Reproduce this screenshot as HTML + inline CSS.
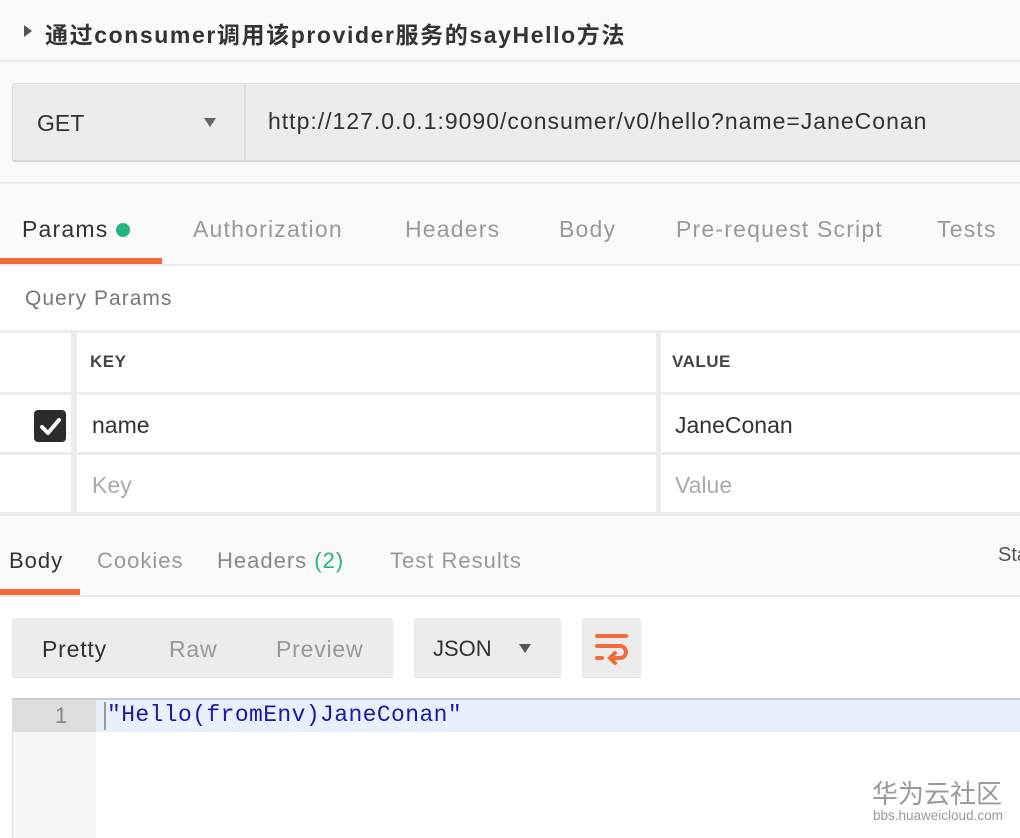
<!DOCTYPE html>
<html><head><meta charset="utf-8"><style>
*{margin:0;padding:0;box-sizing:border-box}
body{width:1020px;height:838px;overflow:hidden;background:#fafafa;font-family:"Liberation Sans","Noto Sans CJK SC",sans-serif;position:relative;color:#333}
.a{position:absolute;white-space:nowrap}
.hl{position:absolute;left:0;width:1020px;background:#ececec}
.t{font-size:23px;letter-spacing:1.2px;top:216px}
.r{font-size:22px;letter-spacing:1px;top:548px}
</style></head><body>
<div class="a" style="left:24px;top:25px;width:0;height:0;border-left:8px solid #555;border-top:6px solid transparent;border-bottom:6px solid transparent"></div>
<div class="a" style="left:45px;top:16px;font-size:23px;font-weight:bold;color:#333;letter-spacing:1.6px">通过consumer调用该provider服务的sayHello方法</div>
<div class="hl" style="top:60px;height:2px"></div>
<div class="a" style="left:12px;top:83px;width:1020px;height:78px;background:#ececec;border:1px solid #ddd;border-radius:3px;box-shadow:0 1px 1px #ccc"></div>
<div class="a" style="left:244px;top:84px;width:2px;height:76px;background:#ddd"></div>
<div class="a" style="left:37px;top:110px;font-size:23px;color:#333">GET</div>
<div class="a" style="left:204px;top:118px;width:0;height:0;border-top:9px solid #666;border-left:6px solid transparent;border-right:6px solid transparent"></div>
<div class="a" style="left:268px;top:108px;font-size:23px;color:#333;letter-spacing:1px">http://127.0.0.1:9090/consumer/v0/hello?name=JaneConan</div>
<div class="hl" style="top:182px;height:2px"></div>
<div class="a" style="left:0;top:184px;width:1020px;height:81px;background:#fafafa"></div>
<div class="a t" style="left:22px;color:#333">Params</div>
<div class="a" style="left:116px;top:223px;width:14px;height:14px;border-radius:50%;background:#26b47f"></div>
<div class="a t" style="left:193px;color:#999">Authorization</div>
<div class="a t" style="left:405px;color:#999">Headers</div>
<div class="a t" style="left:559px;color:#999">Body</div>
<div class="a t" style="left:676px;color:#999">Pre-request Script</div>
<div class="a t" style="left:937px;color:#999">Tests</div>
<div class="a" style="left:0;top:258px;width:162px;height:6px;background:#f26b3a"></div>
<div class="hl" style="top:264px;height:2px"></div>
<div class="a" style="left:0;top:266px;width:1020px;height:250px;background:#fff"></div>
<div class="a" style="left:25px;top:287px;font-size:21px;color:#777;letter-spacing:1px">Query Params</div>
<div class="hl" style="top:330px;height:3px"></div>
<div class="hl" style="top:392px;height:3px"></div>
<div class="hl" style="top:452px;height:3px"></div>
<div class="hl" style="top:512px;height:4px"></div>
<div class="a" style="left:71px;top:330px;width:6px;height:184px;background:#ececec"></div>
<div class="a" style="left:656px;top:330px;width:5px;height:184px;background:#ececec"></div>
<div class="a" style="left:90px;top:352px;font-size:17px;font-weight:bold;color:#444;letter-spacing:.5px">KEY</div>
<div class="a" style="left:672px;top:352px;font-size:17px;font-weight:bold;color:#444;letter-spacing:.5px">VALUE</div>
<div class="a" style="left:34px;top:410px;width:32px;height:32px;background:#2b2b2b;border-radius:4px"></div>
<svg class="a" style="left:34px;top:410px" width="32" height="32"><path d="M8 17 L14 23 L25 10" stroke="#fff" stroke-width="4" fill="none" stroke-linecap="round" stroke-linejoin="round"/></svg>
<div class="a" style="left:92px;top:412px;font-size:23px;color:#333">name</div>
<div class="a" style="left:675px;top:412px;font-size:23px;color:#333">JaneConan</div>
<div class="a" style="left:92px;top:472px;font-size:23px;color:#aaa">Key</div>
<div class="a" style="left:675px;top:472px;font-size:23px;color:#aaa">Value</div>
<div class="a r" style="left:9px;color:#333">Body</div>
<div class="a r" style="left:97px;color:#999">Cookies</div>
<div class="a r" style="left:217px;color:#888">Headers <span style="color:#26b47f">(2)</span></div>
<div class="a r" style="left:390px;color:#999">Test Results</div>
<div class="a" style="left:998px;top:544px;font-size:20px;color:#555">Sta</div>
<div class="a" style="left:0;top:589px;width:80px;height:6px;background:#f26b3a"></div>
<div class="hl" style="top:595px;height:2px"></div>
<div class="a" style="left:0;top:597px;width:1020px;height:241px;background:#fff"></div>
<div class="a" style="left:12px;top:618px;width:381px;height:59px;background:#ececec;border-radius:3px;box-shadow:0 1px 1px #ddd"></div>
<div class="a" style="left:42px;top:636px;font-size:23px;color:#333;letter-spacing:.8px">Pretty</div>
<div class="a" style="left:169px;top:636px;font-size:23px;color:#999;letter-spacing:.8px">Raw</div>
<div class="a" style="left:276px;top:636px;font-size:23px;color:#999;letter-spacing:.8px">Preview</div>
<div class="a" style="left:414px;top:618px;width:147px;height:59px;background:#ececec;border-radius:3px;box-shadow:0 1px 1px #ddd"></div>
<div class="a" style="left:433px;top:636px;font-size:22px;color:#333">JSON</div>
<div class="a" style="left:519px;top:644px;width:0;height:0;border-top:9px solid #555;border-left:6px solid transparent;border-right:6px solid transparent"></div>
<div class="a" style="left:582px;top:618px;width:59px;height:59px;background:#ececec;border-radius:3px;box-shadow:0 1px 1px #ddd"></div>
<svg class="a" style="left:582px;top:618px" width="59" height="59"><g stroke="#f26b3a" stroke-width="4" fill="none" stroke-linecap="round"><path d="M15 18 H44"/><path d="M15 28 H38 a6 6 0 0 1 0 12 H30"/><path d="M15 40 H20"/><path d="M33 35 L28 40 L33 45"/></g></svg>
<div class="a" style="left:12px;top:698px;width:1008px;height:140px;border-top:2px solid #ccc;border-left:1px solid #ddd;background:#fff"></div>
<div class="a" style="left:13px;top:700px;width:83px;height:138px;background:#f7f7f7"></div>
<div class="a" style="left:13px;top:700px;width:83px;height:32px;background:#ddd"></div>
<div class="a" style="left:96px;top:700px;width:924px;height:32px;background:#e8f0fc"></div>
<div class="a" style="left:104px;top:702px;width:2px;height:28px;background:#999"></div>
<div class="a" style="left:55px;top:703px;font-size:22px;color:#888">1</div>
<div class="a" style="left:107px;top:702px;font-size:23px;color:#1a1aa6;font-family:'Liberation Mono',monospace;letter-spacing:.4px">"Hello(fromEnv)JaneConan"</div>
<div class="a" style="left:872px;top:774px;font-size:26px;color:#999">华为云社区</div>
<div class="a" style="left:873px;top:808px;font-size:13.5px;color:#999">bbs.huaweicloud.com</div>
</body></html>
